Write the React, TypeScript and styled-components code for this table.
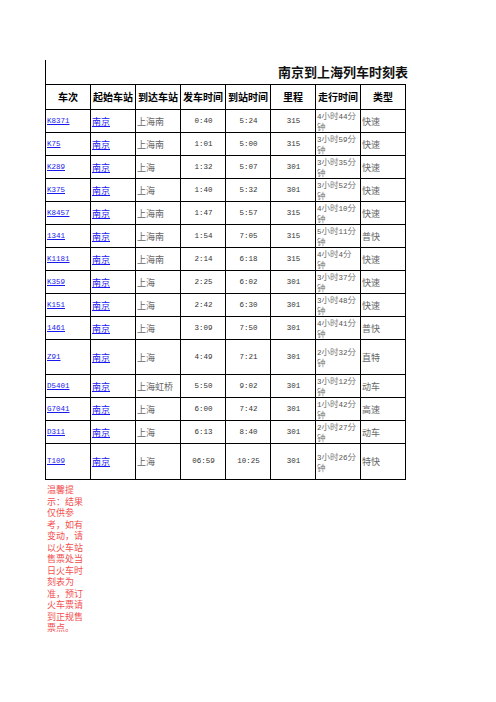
import * as React from "react"
import styled, { createGlobalStyle } from "styled-components"

interface TrainRow {
  no: string
  from: string
  to: string
  depart: string
  arrive: string
  km: string
  duration: string
  kind: string
  tall?: number
}

const trains: TrainRow[] = [
  { no: "K8371", from: "南京", to: "上海南", depart: "0:40", arrive: "5:24", km: "315", duration: "4小时44分钟", kind: "快速" },
  { no: "K75", from: "南京", to: "上海南", depart: "1:01", arrive: "5:00", km: "315", duration: "3小时59分钟", kind: "快速" },
  { no: "K289", from: "南京", to: "上海", depart: "1:32", arrive: "5:07", km: "301", duration: "3小时35分钟", kind: "快速" },
  { no: "K375", from: "南京", to: "上海", depart: "1:40", arrive: "5:32", km: "301", duration: "3小时52分钟", kind: "快速" },
  { no: "K8457", from: "南京", to: "上海南", depart: "1:47", arrive: "5:57", km: "315", duration: "4小时10分钟", kind: "快速" },
  { no: "1341", from: "南京", to: "上海南", depart: "1:54", arrive: "7:05", km: "315", duration: "5小时11分钟", kind: "普快" },
  { no: "K1181", from: "南京", to: "上海南", depart: "2:14", arrive: "6:18", km: "315", duration: "4小时4分钟", kind: "快速" },
  { no: "K359", from: "南京", to: "上海", depart: "2:25", arrive: "6:02", km: "301", duration: "3小时37分钟", kind: "快速" },
  { no: "K151", from: "南京", to: "上海", depart: "2:42", arrive: "6:30", km: "301", duration: "3小时48分钟", kind: "快速" },
  { no: "1461", from: "南京", to: "上海", depart: "3:09", arrive: "7:50", km: "301", duration: "4小时41分钟", kind: "普快" },
  { no: "Z91", from: "南京", to: "上海", depart: "4:49", arrive: "7:21", km: "301", duration: "2小时32分钟", kind: "直特", tall: 34 },
  { no: "D5401", from: "南京", to: "上海虹桥", depart: "5:50", arrive: "9:02", km: "301", duration: "3小时12分钟", kind: "动车" },
  { no: "G7041", from: "南京", to: "上海", depart: "6:00", arrive: "7:42", km: "301", duration: "1小时42分钟", kind: "高速" },
  { no: "D311", from: "南京", to: "上海", depart: "6:13", arrive: "8:40", km: "301", duration: "2小时27分钟", kind: "动车" },
  { no: "T109", from: "南京", to: "上海", depart: "06:59", arrive: "10:25", km: "301", duration: "3小时26分钟", kind: "特快", tall: 35 },
]

const headers = ["车次", "起始车站", "到达车站", "发车时间", "到站时间", "里程", "走行时间", "类型"]

const MONO = '"Liberation Mono", "DejaVu Sans Mono", monospace'
const CJK = '"Noto Sans CJK SC", "Noto Sans", sans-serif'

const GlobalStyle = createGlobalStyle`
  body {
    margin: 0;
    background: #ffffff;
    font-family: ${CJK};
  }
`

const Sheet = styled.div`
  padding: 60px 0 0 45px;
  width: 451px;
`

const Table = styled.table`
  border-collapse: collapse;
  table-layout: fixed;
  width: 361px;
`

const TitleCell = styled.td`
  height: 24px;
  padding: 0;
  border-left: 1px solid #000;
  vertical-align: middle;
`

const Title = styled.div`
  white-space: nowrap;
  padding-left: 232px;
  font-size: 13px;
  font-weight: 700;
  line-height: 16px;
  color: #111;
`

const HeadCell = styled.th`
  height: 24px;
  padding: 0;
  border: 1px solid #000;
  font-size: 10px;
  font-weight: 700;
  line-height: 12px;
  color: #000;
  text-align: center;
  white-space: nowrap;
  overflow: hidden;
`

const Cell = styled.td<{ $align?: string; $tone?: string; $mono?: boolean; $h?: number }>`
  height: ${(p) => p.$h ?? 22}px;
  padding: 0 0 0 1px;
  border: 1px solid #000;
  text-align: ${(p) => p.$align ?? "left"};
  color: ${(p) => p.$tone ?? "#666"};
  font-family: ${(p) => (p.$mono ? MONO : CJK)};
  font-size: ${(p) => (p.$mono ? "7.5px" : "9px")};
  line-height: 11px;
  vertical-align: middle;
  white-space: nowrap;
  overflow: hidden;
`

const Link = styled.a`
  color: #1a1aee;
  text-decoration: underline;
`

const Duration = styled.td<{ $h?: number }>`
  height: ${(p) => p.$h ?? 22}px;
  padding: 0 0 0 1px;
  border: 1px solid #000;
  color: #777;
  font-size: 8.5px;
  line-height: 11px;
  vertical-align: middle;
  white-space: nowrap;
  overflow: hidden;
`

const Digits = styled.span`
  font-family: ${MONO};
  font-size: 7.5px;
  line-height: 0;
  color: #555;
`

const Tips = styled.p`
  margin: 4px 0 0 2px;
  width: 42px;
  font-size: 9px;
  line-height: 11.5px;
  color: #f25050;
`

const renderDuration = (text: string) => {
  const head = text.slice(0, -1)
  const parts = head.split(/(\d+)/).filter((s) => s.length > 0)
  return (
    <>
      {parts.map((part, i) => (/^\d+$/.test(part) ? <Digits key={i}>{part}</Digits> : <span key={i}>{part}</span>))}
      <br />
      {text.slice(-1)}
    </>
  )
}

const App = () => {
  return (
    <Sheet>
      <GlobalStyle />
      <Table>
        <colgroup>
          {headers.map((h) => (
            <col key={h} style={{ width: 45 }} />
          ))}
        </colgroup>
        <tbody>
          <tr>
            <TitleCell colSpan={8}>
              <Title>南京到上海列车时刻表</Title>
            </TitleCell>
          </tr>
          <tr>
            {headers.map((h) => (
              <HeadCell key={h}>{h}</HeadCell>
            ))}
          </tr>
          {trains.map((t) => (
            <tr key={t.no}>
              <Cell $h={t.tall} $mono>
                <Link href="#">{t.no}</Link>
              </Cell>
              <Cell $h={t.tall}>
                <Link href="#">{t.from}</Link>
              </Cell>
              <Cell $h={t.tall}>{t.to}</Cell>
              <Cell $h={t.tall} $align="center" $tone="#333" $mono>
                {t.depart}
              </Cell>
              <Cell $h={t.tall} $align="center" $tone="#333" $mono>
                {t.arrive}
              </Cell>
              <Cell $h={t.tall} $align="center" $tone="#333" $mono>
                {t.km}
              </Cell>
              <Duration $h={t.tall}>{renderDuration(t.duration)}</Duration>
              <Cell $h={t.tall}>{t.kind}</Cell>
            </tr>
          ))}
        </tbody>
      </Table>
      <Tips>温馨提示：结果仅供参考，如有变动，请以火车站售票处当日火车时刻表为准，预订火车票请到正规售票点。</Tips>
    </Sheet>
  )
}

export default App
